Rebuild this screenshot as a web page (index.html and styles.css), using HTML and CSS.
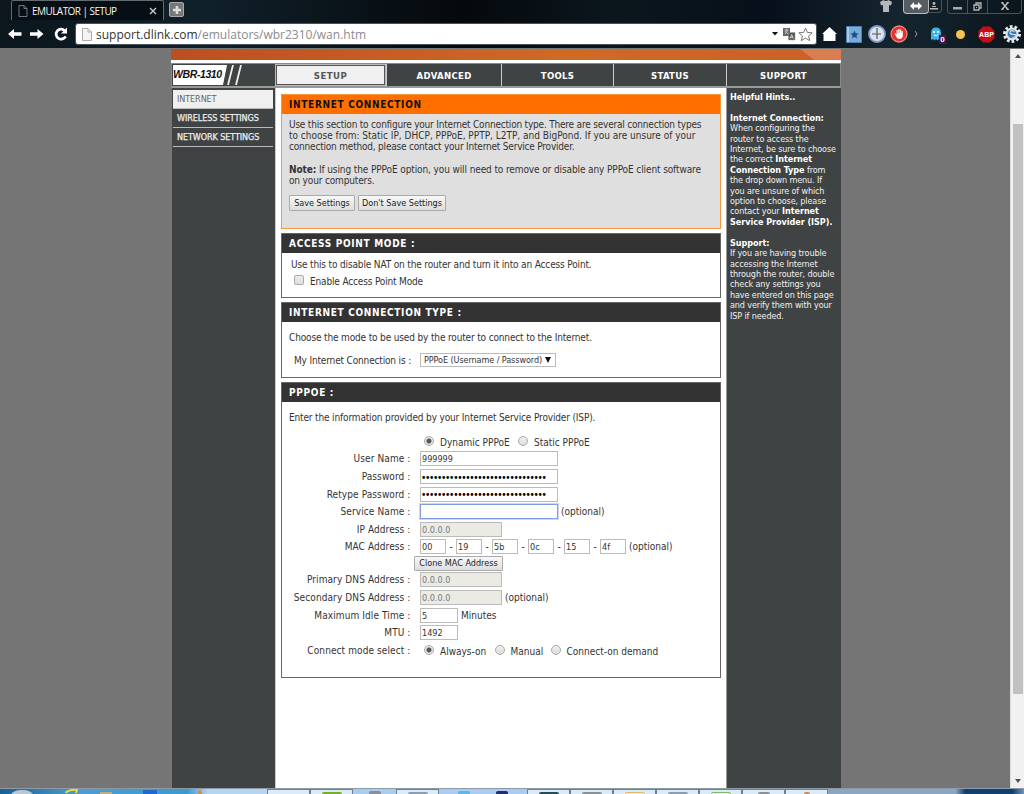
FILE: index.html
```html
<!DOCTYPE html>
<html lang="en">
<head>
	<meta charset="UTF-8">
	<title>EMULATOR | SETUP</title>
	<link rel="stylesheet" href="styles.css">
</head>
<body>
	<header class="browser">
		<div class="tabstrip">
			<div class="tab">
				<svg width="10" height="12" viewBox="0 0 10 12"><path d="M1 .5h5l3 3v8H1zM6 .5v3h3" fill="none" stroke="#6f7880"/></svg>
				<span class="tab-title">EMULATOR | SETUP</span>
				<svg width="8" height="8" viewBox="0 0 8 8"><path d="M1 1l6 6M7 1L1 7" stroke="#c5cace" stroke-width="1.4"/></svg>
			</div>
			<div class="new-tab">
				<svg width="10" height="10" viewBox="0 0 10 10"><path d="M5 1v8M1 5h8" stroke="#ddd" stroke-width="2.6"/></svg>
			</div>
			<svg class="shirt" width="12" height="12" viewBox="0 0 12 12"><path d="M0 2L3.500 0Q6 2 8.500 0L12 2l-1 3.500-2-.5V12H3V5L1 5.500z" fill="#b4b8bb"/></svg>
			<div class="resize">
				<svg width="12" height="8" viewBox="0 0 12 8"><path d="M0 4l4-4v2.500h4V0l4 4-4 4V5.500H4V8z" fill="#fff"/></svg>
			</div>
			<div class="user">
				<svg width="8" height="8" viewBox="0 0 8 8"><circle cx="4" cy="1.500" r="1.400" fill="#bbb"/><path d="M2 4h4v1H2zM0 6h8v1.500H0z" fill="#bbb"/></svg>
			</div>
			<div class="window-buttons">
				<span class="wb"><svg width="9" height="9" viewBox="0 0 9 9"><path d="M0 5h9v2.500H0z" fill="#aaa"/></svg></span>
				<span class="wb"><svg width="9" height="9" viewBox="0 0 9 9"><path d="M3 3V1h5v5H6M1 3h5v5H1z" fill="none" stroke="#b5b5b5" stroke-width="1.300"/><path d="M3 5h1v1H3z" fill="#bbb"/></svg></span>
				<span class="wb wide"><svg width="8" height="8" viewBox="0 0 8 8"><path d="M1 .5l6 7M7 .5l-6 7" stroke="#bbb" stroke-width="1.500"/><path d="M0 .7h2.500M5.500.7H8M0 7.300h2.500M5.500 7.300H8" stroke="#bbb"/></svg></span>
			</div>
		</div>
		<div class="toolbar">
			<svg class="arrow" width="14" height="10" viewBox="0 0 14 10"><path d="M0 5l6-5v3.200h7.500v3.600H6V10z" fill="#fff"/></svg>
			<svg class="arrow" width="14" height="10" viewBox="0 0 14 10"><path d="M13.500 5l-6-5v3.200H0v3.600h7.500V10z" fill="#fff"/></svg>
			<svg class="reload" width="14" height="14" viewBox="0 0 14 14"><path d="M11.600 9.300A5 5 0 1 1 10.500 3.400" fill="none" stroke="#fff" stroke-width="2.700"/><path d="M13 .5v6H7z" fill="#fff"/></svg>
			<div class="address">
				<svg width="10" height="13" viewBox="0 0 10 13"><path d="M.5.5h5.500l3.500 3.500v8.500h-9zM6 .5V4h3.500" fill="#f4f4f4" stroke="#aaa"/></svg>
				<span class="url">support.dlink.com<i>/emulators/wbr2310/wan.htm</i></span>
				<svg width="6" height="4" viewBox="0 0 6 4"><path d="M0 0h6L3 3.500z" fill="#111"/></svg>
				<svg class="translate" width="14" height="14" viewBox="0 0 14 14"><path d="M1 1h7v8H1z" fill="#666"/><path d="M2.500 3h4M4.500 2v1M3 7l3-4M3 4l3 3" stroke="#ddd" stroke-width=".8"/><path d="M6.500 5.500h6.500V13H6.500z" fill="#555" stroke="#999" stroke-width=".5"/><path d="M8 11.500l1.700-4 1.700 4M8.500 10.300h2.400" fill="none" stroke="#ddd" stroke-width=".9"/></svg>
				<svg width="15" height="15" viewBox="0 0 15 15"><path d="M7.500 1l1.900 4.400 4.800.4-3.600 3.100 1.100 4.700-4.200-2.500-4.200 2.500 1.100-4.700L.8 5.800l4.800-.4z" fill="#fff" stroke="#777"/></svg>
			</div>
			<div class="extensions">
				<svg width="15" height="14" viewBox="0 0 15 14"><path d="M7.500 0L15 7h-1.500v7h-12V7H0z" fill="#fff"/></svg>
				<svg class="book" width="16" height="17" viewBox="0 0 16 17"><path d="M.5.500h15v16H.5z" fill="#79acd6" stroke="#4c83b2"/><path d="M1 1h2v15H1z" fill="#a7cbe8"/><path d="M8.500 4.500l1.200 2.800 3 .2-2.300 2 .8 3-2.700-1.700-2.600 1.700.8-3-2.400-2 3-.2z" fill="#174f87"/></svg>
				<svg class="clock" width="18" height="18" viewBox="0 0 18 18"><circle cx="9" cy="9" r="8" fill="#dde3ea" stroke="#7f9fd0" stroke-width="1.800"/><path d="M9 3v6h4M9 9v5M4 9h5" fill="none" stroke="#555" stroke-width="1.200"/></svg>
				<svg class="hand" width="18" height="18" viewBox="0 0 18 18"><circle cx="9" cy="9" r="8" fill="#e3332b" stroke="#f4827a" stroke-width="1.300"/><path d="M4.500 8l1 .2L6.500 10V5h1.200v3h.5V4h1.300v4h.4V4.500h1.300V8h.4V6h1.200v5q-.4 3-3.300 3-2.200 0-3.500-2.500z" fill="#fff"/></svg>
				<svg class="more" width="4" height="6" viewBox="0 0 4 6"><path d="M1 0l2 3-2 3" fill="none" stroke="#99a"/></svg>
				<div class="ghost">
					<svg width="12" height="15" viewBox="0 0 12 15"><path d="M1 13V6Q1 .5 6 .5T11 6v7l-2-1-1.500 1.500L6 12l-1.500 1.500L3 12z" fill="#41b3e5"/><circle cx="4" cy="5" r="1" fill="#fff"/><circle cx="8" cy="5" r="1" fill="#fff"/><path d="M4 8q2 1.500 4 0" fill="none" stroke="#fff"/></svg>
					<span class="badge">0</span>
				</div>
				<span class="sun"></span>
				<div class="abp">
					<svg width="17" height="17" viewBox="0 0 17 17"><path d="M5 .5h7L16.500 5v7L12 16.500H5L.5 12V5z" fill="#c90d14"/></svg>
					<b>ABP</b>
				</div>
				<svg class="gear" width="18" height="18" viewBox="0 0 18 18"><circle cx="9" cy="9" r="7.500" fill="none" stroke="#e4e8eb" stroke-width="3" stroke-dasharray="2.700 2"/><circle cx="9" cy="9" r="6.500" fill="#e4e8eb"/><circle cx="9" cy="9" r="4.500" fill="#3778b5"/><path d="M11.500 6.500q-4-2-4.500.5t4 2.500-.5 3-4.500-1" fill="none" stroke="#d3e4f2" stroke-width="1.200"/></svg>
			</div>
		</div>
	</header>

	<div class="viewport">
		<div class="page">
			<div class="banner"></div>
			<nav class="topnav">
				<div class="model">
					<svg width="72" height="20" viewBox="0 0 72 20"><path d="M0 0h54l-4 20H0z" fill="#fff"/><path d="M60 0l-5 20M68 0l-5 20" stroke="#f0f0f0" stroke-width="1.800"/></svg>
					<span class="model-name">WBR-1310</span>
				</div>
				<a class="current">SETUP</a>
				<a class="advanced">ADVANCED</a>
				<a class="tools">TOOLS</a>
				<a class="status">STATUS</a>
				<a class="support">SUPPORT</a>
			</nav>
			<div class="columns">
				<aside class="sidenav">
					<a class="active">INTERNET</a>
					<a>WIRELESS SETTINGS</a>
					<a>NETWORK SETTINGS</a>
				</aside>
				<main class="content">
					<section class="box orange">
						<h1>INTERNET CONNECTION</h1>
						<p><span class="tight">Use this section to configure your Internet Connection type. There are several connection types</span><br><span class="loose">to choose from: Static IP, DHCP, PPPoE, PPTP, L2TP, and BigPond. If you are unsure of your</span><br><span class="tight">connection method, please contact your Internet Service Provider.</span><br><br><span class="note-line"><b>Note:</b> If using the PPPoE option, you will need to remove or disable any PPPoE client software</span><br>on your computers.</p>
						<div class="buttons">
							<button class="save">Save Settings</button>
							<button class="dont">Don't Save Settings</button>
						</div>
					</section>

					<section class="box access">
						<h2>ACCESS POINT MODE :</h2>
						<p>Use this to disable NAT on the router and turn it into an Access Point.</p>
						<label class="check"><input type="checkbox"> Enable Access Point Mode</label>
					</section>

					<section class="box type">
						<h2>INTERNET CONNECTION TYPE :</h2>
						<p>Choose the mode to be used by the router to connect to the Internet.</p>
						<div class="type-row">
							<span class="type-label">My Internet Connection is :</span>
							<div class="dropdown"><span>PPPoE (Username / Password)</span><svg width="6" height="6" viewBox="0 0 6 6"><path d="M0 0h6L3 6z" fill="#111"/></svg></div>
						</div>
					</section>

					<section class="box pppoe">
						<h2>PPPOE :</h2>
						<p>Enter the information provided by your Internet Service Provider (ISP).</p>
						<div class="row radios">
							<label class="label"></label>
							<input type="radio" name="mode" checked><span class="dynamic">Dynamic PPPoE</span>
							<input type="radio" name="mode"><span>Static PPPoE</span>
						</div>
						<div class="row"><label class="label">User Name :</label><input class="long" type="text" value="999999"></div>
						<div class="row"><label class="label">Password :</label><input class="long" type="password" value="1234567890123456789012345678901"></div>
						<div class="row"><label class="label">Retype Password :</label><input class="long" type="password" value="1234567890123456789012345678901"></div>
						<div class="row"><label class="label">Service Name :</label><input class="long focused" type="text"><span class="after">(optional)</span></div>
						<div class="row"><label class="label">IP Address :</label><input class="ip" type="text" value="0.0.0.0" disabled></div>
						<div class="row mac">
							<label class="label">MAC Address :</label>
							<input type="text" value="00"><i>-</i><input type="text" value="19"><i>-</i><input type="text" value="5b"><i>-</i><input type="text" value="0c"><i>-</i><input type="text" value="15"><i>-</i><input type="text" value="4f"><span class="after">(optional)</span>
						</div>
						<div class="row clone"><button>Clone MAC Address</button></div>
						<div class="row"><label class="label">Primary DNS Address :</label><input class="ip" type="text" value="0.0.0.0" disabled></div>
						<div class="row"><label class="label">Secondary DNS Address :</label><input class="ip" type="text" value="0.0.0.0" disabled><span class="after">(optional)</span></div>
						<div class="row"><label class="label">Maximum Idle Time :</label><input class="short" type="text" value="5"><span class="after">Minutes</span></div>
						<div class="row"><label class="label">MTU :</label><input class="short" type="text" value="1492"></div>
						<div class="row radios">
							<label class="label">Connect mode select :</label>
							<input type="radio" name="connect" checked><span class="always">Always-on</span>
							<input type="radio" name="connect"><span class="manual">Manual</span>
							<input type="radio" name="connect"><span>Connect-on demand</span>
						</div>
					</section>
				</main>
				<aside class="hints">
					<b>Helpful Hints..</b><br><br>
					<b>Internet Connection:</b><br>When configuring the<br>router to access the<br>Internet, be sure to choose<br>the correct <b>Internet</b><br><b>Connection Type</b> from<br>the drop down menu. If<br>you are unsure of which<br>option to choose, please<br>contact your <b>Internet</b><br><b>Service Provider (ISP).</b><br><br>
					<b>Support:</b><br>If you are having trouble<br>accessing the Internet<br>through the router, double<br>check any settings you<br>have entered on this page<br>and verify them with your<br>ISP if needed.
				</aside>
			</div>
		</div>
		<div class="scrollbar">
			<svg width="6" height="4" viewBox="0 0 6 4"><path d="M0 4h6L3 0z" fill="#505050"/></svg>
			<div class="thumb"></div>
			<svg width="6" height="4" viewBox="0 0 6 4"><path d="M0 0h6L3 4z" fill="#505050"/></svg>
		</div>
	</div>

	<footer class="taskbar">
		<div class="pinned">
			<span class="start"></span>
			<svg width="14" height="4" viewBox="0 0 14 4"><path d="M0 4Q5 0 12 1l-1 3" fill="none" stroke="#f1dc35" stroke-width="2"/></svg>
			<span class="folder"></span>
			<span class="blue"></span>
			<svg class="cone" width="4" height="5" viewBox="0 0 4 5"><path d="M2 0l2 5H0z" fill="#f08218"/></svg>
		</div>
		<span class="task"></span>
		<span class="task"><i class="green"></i></span>
		<span class="plain"><i class="gray thin"></i></span>
		<span class="task"><i class="steel"></i></span>
		<span class="plain wide"><i class="sky"></i><i class="navy"></i></span>
		<span class="task"><i class="teal"></i></span>
		<span class="task"><i class="gray"></i></span>
		<span class="task"><i class="note"></i></span>
		<span class="task"><i class="steel"></i></span>
		<span class="task"><i class="leaf"></i></span>
		<span class="task"><i class="gray thin"></i></span>
		<span class="task"><i class="rust"></i></span>
		<span class="tray"></span>
	</footer>
</body>
</html>
```
FILE: styles.css
```css
* {
	box-sizing: border-box;
}

body {
	margin: 0;
	width: 1024px;
	height: 794px;
	overflow: hidden;
	display: flex;
	flex-direction: column;
	font-family: "DejaVu Sans Condensed", "DejaVu Sans", sans-serif;
	font-size: 10px;
	color: #333;
	white-space: nowrap;
}

svg {
	display: block;
	flex: none;
}

i {
	font-style: normal;
}

/* browser chrome */
.browser {
	height: 49px;
	flex: none;
	background: linear-gradient(90deg, #0b161d, #10202a 20%, #05090c 45%, #0b161d 60%, #07101a 75%, #15252f 88%, #0a141b);
	border-bottom: 1px solid #777;
}

.tabstrip {
	display: flex;
	height: 20px;
	padding-left: 11px;
}

.tab {
	width: 153px;
	height: 20px;
	display: flex;
	align-items: center;
	padding: 0 6px 0 6px;
	border: 1px solid #626b71;
	border-bottom: 0;
	border-radius: 2px 2px 0 0;
	background: #080f14;
}

.tab-title {
	flex: 1;
	padding-left: 4px;
	color: #f4f4f4;
	font: 10px "Open Sans", sans-serif;
	letter-spacing: -.55px;
}

.new-tab {
	width: 15px;
	height: 15px;
	margin: 2px 0 0 5px;
	padding: 2px;
	border: 1px solid #aaa;
	border-radius: 2px;
	background: #777;
}

.shirt {
	margin: 0 0 0 696px;
}

.resize {
	display: flex;
	justify-content: center;
	width: 26px;
	height: 14px;
	margin-left: 11px;
	padding-top: 2px;
	border: 1px solid #bbb;
	border-top: 0;
	border-radius: 0 0 4px 4px;
	background: #555d62;
}

.user {
	width: 13px;
	height: 13px;
	padding: 2px 0 0 1px;
	border: 1px solid #48525a;
	border-width: 0 1px 1px 0;
	border-radius: 0 0 4px 0;
}

.window-buttons {
	display: flex;
	margin-left: 5px;
	height: 14px;
	border: 1px solid #48525a;
	border-top: 0;
	border-radius: 0 0 4px 4px;
}

.wb {
	width: 20px;
	display: flex;
	justify-content: center;
	padding-top: 2px;
	border-right: 1px solid #48525a;
}

.wb.wide {
	width: 33px;
	border: 0;
}

.toolbar {
	display: flex;
	align-items: center;
	height: 27px;
	padding: 1px 0 0 8px;
}

.arrow {
	margin-right: 8px;
}

.reload {
	margin: 0 7px 0 2px;
}

.address {
	flex: none;
	display: flex;
	align-items: center;
	width: 742px;
	height: 22px;
	padding: 0 3px 0 6px;
	border: 1px solid #48525a;
	border-radius: 3px;
	background: #fff;
}

.address .translate {
	margin: 0 2px 0 4px;
}

.url {
	flex: 1;
	margin-left: 4px;
	color: #333;
	font: 12px "Open Sans", sans-serif;
}

.url i {
	color: #8b8b8b;
}

.extensions {
	display: flex;
	align-items: center;
	padding-left: 5px;
}

.book {
	margin: 0 6px 0 9px;
}

.hand {
	margin: 0 6px 0 4px;
}

.ghost {
	position: relative;
	margin-left: 12px;
}

.badge {
	position: absolute;
	left: 9px;
	top: 8px;
	width: 7px;
	height: 9px;
	background: #4c1454;
	color: #fff;
	font: bold 8px/9px "Liberation Sans", sans-serif;
	text-align: center;
}

.sun {
	width: 9px;
	height: 9px;
	border-radius: 50%;
	background: #f8c252;
	margin: 0 13px 0 14px;
}

.abp {
	position: relative;
	margin-right: 8px;
}

.abp b {
	position: absolute;
	left: 0;
	top: 4px;
	width: 17px;
	color: #fff;
	font: bold 7px/9px "Liberation Sans", sans-serif;
	text-align: center;
}

/* router page */
.viewport {
	flex: 1;
	min-height: 0;
	display: flex;
	background: #757575;
}

.page {
	width: 670px;
	margin: 0 169px 0 171px;
	flex: none;
	display: flex;
	flex-direction: column;
	background: #fff;
}

.banner {
	height: 11px;
	flex: none;
	margin-bottom: 3px;
	background: linear-gradient(90deg, #bc4f20, #cf6a26 60%, #cc5f27);
	position: relative;
}

.banner::after {
	content: "";
	position: absolute;
	right: 0;
	top: 0;
	width: 41px;
	height: 11px;
	background: #da7d4f;
	clip-path: polygon(0 0, 100% 0, 100% 100%, 14px 100%);
}

.topnav {
	display: flex;
	height: 25px;
	flex: none;
	background: #404343;
	border: 1px solid #888;
	border-bottom: 2px solid #999;
}

.topnav a {
	display: flex;
	align-items: center;
	justify-content: center;
	border-left: 1px solid #ccc;
	color: #fff;
	font-weight: bold;
	font-size: 9.5px;
	letter-spacing: .3px;
}

.topnav .current {
	width: 111px;
	border: 1px solid #bbb;
	outline: 1px solid #555;
	outline-offset: -2px;
	background: #f0f0f0;
	color: #555;
	letter-spacing: .5px;
}

.advanced {
	width: 115px;
}

.tools {
	width: 112px;
}

.status {
	width: 113px;
}

.support {
	flex: 1;
}

.model {
	position: relative;
	width: 103px;
	padding: 1px 0 0 1px;
}

.model-name {
	position: absolute;
	left: 1px;
	top: 4px;
	color: #111;
	font: italic bold 10.5px/13px "Liberation Sans", sans-serif;
	letter-spacing: -.4px;
}

.columns {
	flex: 1;
	display: flex;
	min-height: 0;
}

.sidenav {
	width: 104px;
	padding: 2px 2px 0 1px;
	border-left: 1px solid #777;
	background: #404343;
}

.sidenav a {
	display: block;
	height: 19px;
	padding-left: 4px;
	border-bottom: 1px solid #bbb;
	color: #eee;
	font-size: 9px;
	line-height: 18px;
	letter-spacing: -.1px;
	-webkit-text-stroke: .25px;
}

.sidenav .active {
	background: #f0f0f0;
	color: #666;
	-webkit-text-stroke: 0;
}

.content {
	width: 452px;
	padding: 6px 6px 0 6px;
	border-left: 1px solid #ccc;
	border-right: 1px solid #999;
}

.hints {
	width: 114px;
	padding: 4px 0 0 3px;
	background: #404343;
	color: #f0f0f0;
	font-size: 9px;
	line-height: 10.4px;
	letter-spacing: -.13px;
}

.hints b {
	color: #fff;
	letter-spacing: -.04px;
}

.box {
	width: 440px;
	margin-bottom: 4px;
	margin-left: -1px;
	border: 1px solid #666;
}

.box h1,
.box h2 {
	margin: 0;
	height: 19px;
	padding-left: 7px;
	background: #333;
	color: #fff;
	font-size: 10px;
	line-height: 20px;
	letter-spacing: .68px;
}

.box h1 {
	background: #ff6f00;
	color: #111;
}

.box p {
	margin: 0;
	padding-left: 7px;
	line-height: 11.2px;
	letter-spacing: -.15px;
}

.tight {
	letter-spacing: -.2px;
}

.loose {
	letter-spacing: -.01px;
}

.note-line {
	letter-spacing: -.11px;
}

.orange {
	height: 135px;
	border-color: #f8963e;
	background: #dfdfdf;
}

.orange p {
	padding-top: 5px;
}

button {
	height: 16px;
	padding: 0;
	border: 1px solid #aaa;
	border-radius: 1px;
	background: linear-gradient(#f8f8f8, #ddd);
	color: #222;
	font-family: inherit;
	font-size: 9px;
}

.buttons {
	display: flex;
	gap: 3px;
	padding: 9px 0 0 7px;
}

.save {
	width: 66px;
}

.dont {
	width: 88px;
}

.access {
	height: 65px;
}

.access p {
	padding: 6px 0 0 9px;
}

.check {
	display: flex;
	align-items: center;
	gap: 6px;
	height: 22px;
	padding-left: 12px;
	letter-spacing: -.16px;
}

input {
	margin: 0;
	flex: none;
	font-family: inherit;
}

input[type="checkbox"],
input[type="radio"] {
	appearance: none;
	width: 10px;
	height: 10px;
	border: 1px solid #aaa;
	border-radius: 2px;
	background: linear-gradient(#eee, #ddd);
}

.check input {
	margin-bottom: 3px;
}

input[type="radio"] {
	border-radius: 50%;
}

input[type="radio"]:checked {
	background: radial-gradient(#555 0 2px, #e6e6e6 3px);
}

.type {
	height: 76px;
}

.type p {
	padding-top: 10px;
}

.type-row {
	display: flex;
	align-items: center;
	padding: 10px 0 0 12px;
}

.type-label {
	width: 126px;
	letter-spacing: -.16px;
}

.dropdown {
	display: flex;
	align-items: center;
	justify-content: space-between;
	width: 136px;
	height: 14px;
	padding: 0 4px 0 3px;
	border: 1px solid #bbb;
	font-size: 9px;
	letter-spacing: -.08px;
}

.pppoe {
	height: 296px;
}

.box.pppoe p {
	padding: 10px 0 9.4px 7px;
}

.row {
	display: flex;
	align-items: center;
	height: 17.6px;
}

.label {
	width: 128.500px;
	margin-right: 9.500px;
	text-align: right;
	letter-spacing: .1px;
}

.row input[type="text"],
.row input[type="password"] {
	height: 15px;
	padding: 1px 1px 0;
	border: 1px solid #bbb;
	background: #fff;
	color: #333;
	font-size: 9px;
}

.row input[type="password"] {
	padding-left: 0;
	color: #000;
	font-size: 10px;
	letter-spacing: -1.29px;
}

.row .long {
	width: 138px;
}

.row .focused[type="text"] {
	border-color: #7d9fe0;
	box-shadow: 0 0 0 1px #c9d8f5;
}

.row .ip[type="text"] {
	width: 82px;
	background: #ebebe4;
	color: #777;
}

.short {
	width: 38px;
}

.after {
	margin-left: 3px;
}

.mac input {
	width: 26px;
}

.mac i {
	width: 10px;
	text-align: center;
}

.clone {
	height: 15.4px;
	padding-left: 132px;
}

.clone button {
	width: 89px;
	height: 15px;
}

.radios input {
	margin: 0 6px 0 4px;
}

.radios span {
	padding-top: 2px;
}

.dynamic {
	width: 74px;
}

.always {
	width: 50.5px;
}

.manual {
	width: 36px;
}

/* scrollbar */
.scrollbar {
	width: 14px;
	display: flex;
	flex-direction: column;
	align-items: center;
	padding: 5px 0;
	border-left: 1px solid #ddd;
	background: #f1f1f1;
}

.thumb {
	width: 10px;
	height: 570px;
	margin: 66px 0 auto;
	background: #c1c1c1;
}

/* windows taskbar */
.taskbar {
	display: flex;
	height: 6px;
	flex: none;
	border-top: 1px solid #8b9aa5;
	background: #a8cdf0;
}

.pinned {
	display: flex;
	width: 267px;
	padding-left: 11px;
	background: linear-gradient(90deg, #1c5f91, #4f9dce 30%, #3f98cd 70%, #b8d4f3 78%);
}

.start {
	width: 22px;
	height: 10px;
	margin: 1px 32px 0 0;
	border-radius: 50%;
	background: #b8c8d4;
}

.folder {
	width: 12px;
	height: 3px;
	margin: 3px 31px 0 21px;
	background: #c3ae79;
}

.blue {
	width: 14px;
	height: 4px;
	margin: 1px 41px 0 0;
	background: #2268c8;
}

.task,
.plain {
	width: 43px;
	flex: none;
	display: flex;
	justify-content: center;
}

.task {
	border: 1px solid #6d8195;
	border-bottom: 0;
	background: #dcebfa;
}

.task i,
.plain i {
	width: 20px;
	height: 4px;
	margin-top: 2px;
	border-radius: 2px 2px 0 0;
}

.plain.wide {
	width: 88px;
	gap: 26px;
}

.green {
	background: #79af24;
}

.gray {
	background: #8c8f93;
}

.steel {
	background: #8b9eb4;
}

.plain .sky {
	width: 12px;
	background: #59bce8;
}

.plain .navy {
	width: 12px;
	background: #252c74;
}

.teal {
	background: #254c57;
}

.note {
	background: #fff2cf;
	border: 1px solid #e8b65a;
}

.leaf {
	background: #e4f3dd;
	border: 1px solid #80b865;
}

.task .thin,
.plain .thin {
	width: 12px;
}

.task .rust {
	width: 6px;
	background: #cc8a60;
}

.tray {
	flex: 1;
	background: linear-gradient(90deg, #8ba5c2 65%, #123e73 70%, #123e73 94%, #7195bb);
}
```
